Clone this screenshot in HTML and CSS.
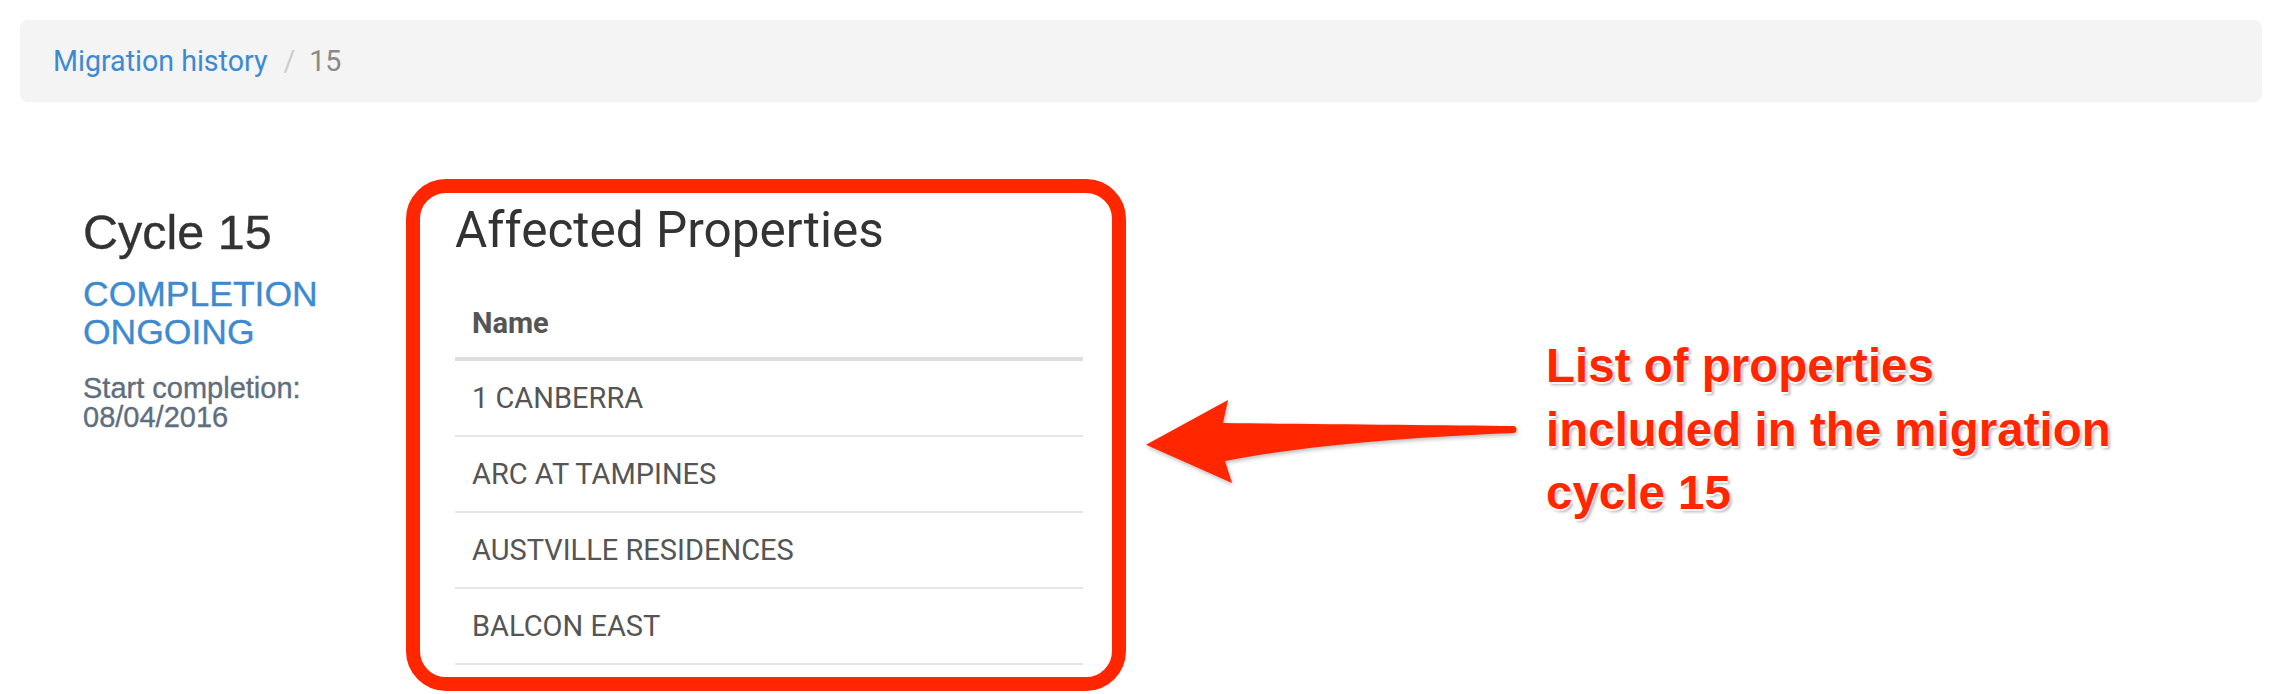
FILE: index.html
```html
<!DOCTYPE html>
<html lang="en">
<head>
<meta charset="utf-8">
<title>Migration history / 15</title>
<link rel="stylesheet" href="styles.css">
</head>
<body>
<div class="page">
  <nav class="breadcrumb">
    <a class="crumb-link" href="#">Migration history</a>
    <span class="crumb-sep">/</span>
    <span class="crumb-active">15</span>
  </nav>

  <div class="main">
    <aside class="cycle">
      <h2 class="cycle-title">Cycle 15</h2>
      <div class="cycle-status">COMPLETION ONGOING</div>
      <div class="cycle-date">Start completion: 08/04/2016</div>
    </aside>

    <section class="highlight">
      <h3 class="panel-title">Affected Properties</h3>
      <table class="props">
        <thead>
          <tr><th>Name</th></tr>
        </thead>
        <tbody>
          <tr><td>1 CANBERRA</td></tr>
          <tr><td>ARC AT TAMPINES</td></tr>
          <tr><td>AUSTVILLE RESIDENCES</td></tr>
          <tr><td>BALCON EAST</td></tr>
        </tbody>
      </table>
    </section>

    <div class="note">
      <svg class="note-arrow" width="380" height="92" viewBox="0 0 380 92" aria-hidden="true">
        <path d="M6,48.7 L88,4 L83,27 C180,28 300,29 373,30 A3.5,3.5 0 0 1 373,37 C250,42 150,52 85,65 L92,87 Z" fill="#ff2600"/>
      </svg>
      <p class="note-text">List of properties<br>included in the migration<br>cycle 15</p>
    </div>
  </div>
</div>
</body>
</html>
```

FILE: styles.css
```css
html, body {
  margin: 0;
  padding: 0;
  background: #ffffff;
  overflow: hidden;
}

body {
  font-family: "Liberation Sans", Arial, sans-serif;
  color: #333333;
}

.page {
  padding: 20px 32px 0 20px;
}

/* Breadcrumb */
.breadcrumb {
  display: flex;
  align-items: center;
  height: 82px;
  box-sizing: border-box;
  padding-left: 33px;
  background: #f4f4f4;
  border-radius: 8px;
  font-family: Roboto, "Liberation Sans", sans-serif;
  font-size: 28.6px;
}

.crumb-link {
  color: #3d8ad0;
  text-decoration: none;
}

.crumb-sep {
  color: #cccccc;
  margin: 0 14px 0 16px;
}

.crumb-active {
  color: #8a8a8a;
}

/* Main row */
.main {
  display: flex;
  align-items: flex-start;
  margin-top: 77px;
}

/* Left column */
.cycle {
  width: 386px;
  box-sizing: border-box;
  padding: 27px 0 0 63px;
  flex-shrink: 0;
  -webkit-text-stroke: 0.35px currentColor;
}

.cycle-title,
.cycle-status,
.cycle-date {
  width: 270px;
}

.cycle-title {
  margin: 0;
  font-size: 48.5px;
  font-weight: normal;
  line-height: 1.1;
  color: #333333;
}

.cycle-status {
  margin-top: 16px;
  font-size: 35.5px;
  line-height: 38px;
  color: #3d8ad0;
}

.cycle-date {
  margin-top: 23px;
  font-size: 29px;
  line-height: 29px;
  color: #5f6e7d;
}

/* Highlighted panel */
.highlight {
  width: 720px;
  box-sizing: border-box;
  flex-shrink: 0;
  border: 14px solid #ff2600;
  border-radius: 40px;
  padding: 10px 29px 12px 35px;
  font-family: Roboto, "Liberation Sans", sans-serif;
}

.panel-title {
  margin: 0 0 29px 0;
  font-size: 49.5px;
  font-weight: normal;
  line-height: 1.1;
  color: #333333;
}

.props {
  width: 100%;
  border-collapse: collapse;
  font-size: 29px;
  color: #555555;
}

.props th,
.props td {
  text-align: left;
  line-height: 43px;
}

.props th {
  padding: 16px 17px 12px;
  font-weight: 700;
  border-bottom: 4px solid #dddddd;
}

.props td {
  padding: 16px 17px 15px;
  font-weight: 400;
  border-bottom: 2px solid #e6e6e6;
}

/* Annotation */
.note {
  display: flex;
  align-items: flex-start;
  margin-left: 14px;
}

.note-arrow {
  display: block;
  margin-top: 217px;
  flex-shrink: 0;
  filter: drop-shadow(1px 2px 2px rgba(0, 0, 0, 0.28));
}

.note-text {
  margin: 155px 0 0 26px;
  font-family: "Liberation Sans", Arial, sans-serif;
  font-size: 47.5px;
  font-weight: 700;
  line-height: 63.5px;
  color: #ff2600;
  white-space: nowrap;
  text-shadow: 0 0 2px #ffffff, 0 2px 1px #ffffff, 2px 3px 3px rgba(0, 0, 0, 0.3);
}
```
